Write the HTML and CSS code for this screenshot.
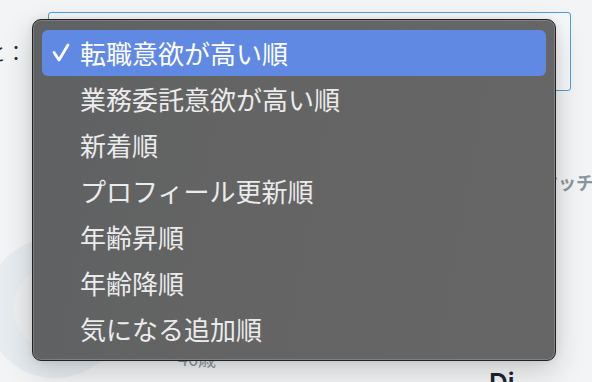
FILE: index.html
```html
<!DOCTYPE html>
<html lang="ja">
<head>
<meta charset="utf-8">
<link rel="stylesheet" href="styles.css">
</head>
<body>
<div class="page">
  <div class="filter-row">
    <span class="label">順と：</span>
    <div class="select-box"></div>
  </div>
  <div class="match-row"><span class="match">マッチ度</span></div>
  <div class="bottom-row">
    <div class="avatar"><div class="avatar-inner"></div></div>
    <div class="card-info">
      <span class="age">46歳</span>
      <span class="name">Di</span>
    </div>
  </div>

  <div class="menu">
    <div class="item selected">
      <svg class="check" width="20" height="22" viewBox="0 0 20 22"><polyline points="3,10.5 8,18 17,3" fill="none" stroke="#fff" stroke-width="2.8" stroke-linecap="round" stroke-linejoin="round"/></svg>
      <span>転職意欲が高い順</span>
    </div>
    <div class="item"><span>業務委託意欲が高い順</span></div>
    <div class="item"><span>新着順</span></div>
    <div class="item"><span>プロフィール更新順</span></div>
    <div class="item"><span>年齢昇順</span></div>
    <div class="item"><span>年齢降順</span></div>
    <div class="item"><span>気になる追加順</span></div>
  </div>
</div>
</body>
</html>
```

FILE: styles.css
```css
html, body {
  margin: 0;
  padding: 0;
}
body {
  width: 592px;
  height: 382px;
  overflow: hidden;
  background: #f3f4f5;
  font-family: "Noto Sans CJK JP", "Noto Sans", sans-serif;
}
.page {
  position: relative;
  width: 592px;
  height: 382px;
  display: flex;
  flex-direction: column;
}
.filter-row {
  display: flex;
  align-items: flex-start;
  box-sizing: border-box;
  padding-top: 12px;
  height: 92px;
  flex-shrink: 0;
}
.label {
  font-size: 20px;
  color: #1e2a33;
  margin-left: -34px;
  margin-top: 31px;
  line-height: 20px;
  width: 82px;
  white-space: nowrap;
}
.select-box {
  width: 521px;
  height: 77px;
  border: 1px solid #4aa0e6;
  border-radius: 3px;
  background: #f7f8f9;
}
.match-row {
  height: 110px;
  flex-shrink: 0;
  padding-top: 78px;
  box-sizing: border-box;
  padding-left: 540px;
  white-space: nowrap;
}
.match {
  font-size: 18px;
  font-weight: 700;
  color: #8a959e;
  line-height: 24px;
}
.bottom-row {
  flex: 0 0 180px;
  display: flex;
  box-sizing: border-box;
  padding-top: 36px;
}
.avatar {
  width: 140px;
  height: 140px;
  margin-left: -15px;
  border-radius: 50%;
  background: #e6ecf0;
  display: flex;
  align-items: center;
  justify-content: center;
  flex-shrink: 0;
}
.avatar-inner {
  width: 84px;
  height: 84px;
  border-radius: 50%;
  background: #eeeff0;
}
.card-info {
  display: flex;
  align-items: flex-start;
  flex: 1;
  padding-left: 53px;
  padding-top: 109px;
}
.age {
  font-size: 18px;
  color: #8a959e;
  line-height: 22px;
  flex-shrink: 0;
}
.name {
  margin-left: 273px;
  margin-top: 21px;
  font-size: 26px;
  font-weight: 600;
  color: #1a2530;
  font-family: "Inter", "Noto Sans", sans-serif;
  line-height: 30px;
  flex-shrink: 0;
}
.menu {
  position: absolute;
  left: 32px;
  top: 19px;
  box-sizing: border-box;
  width: 524px;
  height: 342px;
  padding: 10px 9px;
  border: 1px solid #232323;
  border-radius: 9px;
  background: linear-gradient(100deg, #5f6162 0%, #646464 40%, #666666 100%);
  box-shadow: inset 0 0 0 1px rgba(255,255,255,0.18), 0 10px 30px rgba(0,0,0,0.18), 0 0 8px rgba(0,0,0,0.08);
  display: flex;
  flex-direction: column;
  z-index: 2;
}
.item {
  height: 46px;
  flex-shrink: 0;
  display: flex;
  align-items: center;
  padding-left: 38px;
  color: #ebebeb;
  font-size: 26px;
  line-height: 30px;
  position: relative;
  border-radius: 6px;
}
.item.selected {
  background: #5f89e3;
  color: #ffffff;
}
.check {
  position: absolute;
  left: 9px;
  top: 12px;
}
```
